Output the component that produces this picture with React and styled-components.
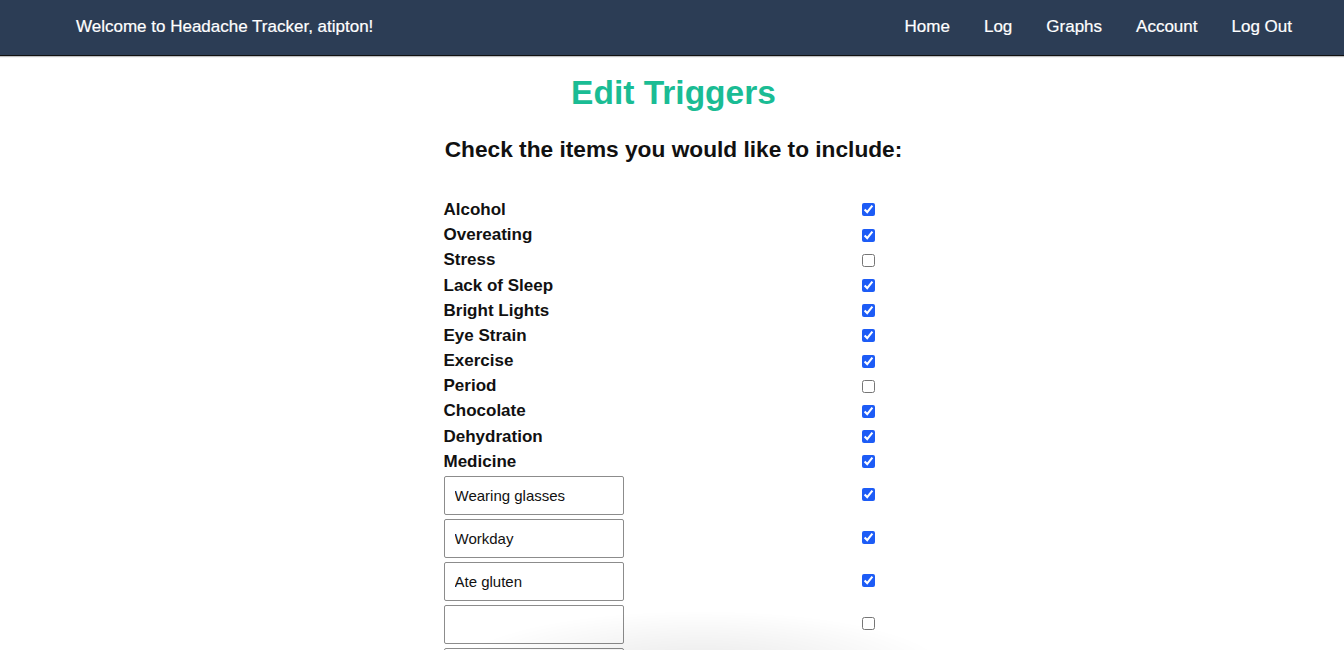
import React, { useState } from "react";
import styled, { createGlobalStyle } from "styled-components";

const GlobalStyle = createGlobalStyle`
	html, body {
		margin: 0;
		padding: 0;
		background: #fff;
		font-family: "Liberation Sans", Arial, Helvetica, sans-serif;
		color: #111;
	}
`;

const Nav = styled.nav`
	height: 55px;
	background-color: #2c3d55;
	border-bottom: 1px solid #111;
	box-shadow: 0 1px 1px rgba(0, 0, 0, 0.25);
	display: flex;
	align-items: center;
	justify-content: space-between;
	padding: 0 52px 0 76px;
	color: #fff;
	font-size: 17px;
	-webkit-text-stroke: 0.2px #fff;
`;

const Welcome = styled.span`
	padding-bottom: 2px;
`;

const Links = styled.ul`
	display: flex;
	gap: 34px;
	list-style: none;
	margin: 0;
	padding: 0 0 2px 0;
`;

const NavLink = styled.li`
	cursor: pointer;
`;

const Main = styled.main`
	display: flex;
	flex-direction: column;
	align-items: center;
	padding-left: 3px;
`;

const Title = styled.h1`
	margin: 17px 0 0;
	font-size: 33.5px;
	line-height: 40px;
	font-weight: 700;
	color: #1abc94;
`;

const Subtitle = styled.h3`
	margin: 22px 0 0;
	font-size: 22.7px;
	line-height: 28px;
	font-weight: 700;
`;

const List = styled.form`
	width: 460px;
	margin-top: 34.4px;
	display: grid;
	grid-template-columns: 413px 24px;
`;

const Label = styled.label`
	height: ${(p) => (p.$input ? "43px" : "25.2px")};
	display: flex;
	align-items: ${(p) => (p.$input ? "flex-start" : "center")};
	padding-top: ${(p) => (p.$input ? "1.4px" : "0")};
	box-sizing: border-box;
	font-size: 17px;
	font-weight: 700;
`;

const Box = styled.div`
	height: ${(p) => (p.$input ? "43px" : "25.2px")};
	display: flex;
	align-items: center;
	justify-content: center;
	padding-bottom: ${(p) => (p.$input ? "2.6px" : "0")};
	box-sizing: border-box;
`;

const Check = styled.input`
	width: 13px;
	height: 13px;
	margin: 0;
	accent-color: #1d5cf6;
`;

const TextInput = styled.input`
	width: 180px;
	height: 39px;
	box-sizing: border-box;
	border: 1px solid #8c8c8c;
	border-radius: 2px;
	padding: 0 10px;
	font-family: "Liberation Sans", Arial, sans-serif;
	font-size: 15px;
	color: #111;
	outline: none;
`;

const Shade = styled.div`
	position: fixed;
	left: 450px;
	bottom: -80px;
	width: 500px;
	height: 120px;
	border-radius: 50%;
	background: radial-gradient(ellipse at center, rgba(0, 0, 0, 0.09) 0%, rgba(0, 0, 0, 0.04) 40%, rgba(0, 0, 0, 0) 70%);
	pointer-events: none;
`;

const fixed = [
	["Alcohol", true],
	["Overeating", true],
	["Stress", false],
	["Lack of Sleep", true],
	["Bright Lights", true],
	["Eye Strain", true],
	["Exercise", true],
	["Period", false],
	["Chocolate", true],
	["Dehydration", true],
	["Medicine", true],
];

const custom = [
	["Wearing glasses", true],
	["Workday", true],
	["Ate gluten", true],
	["", false],
	["", false],
];

export default function App() {
	const [checks, setChecks] = useState(fixed.map((f) => f[1]));
	const [customs, setCustoms] = useState(custom);

	const toggle = (i) => {
		const next = [...checks];
		next[i] = !next[i];
		setChecks(next);
	};

	const updateCustom = (i, val, idx) => {
		const next = customs.map((c) => [...c]);
		next[i][idx] = val;
		setCustoms(next);
	};

	return (
		<>
			<GlobalStyle />
			<Nav>
				<Welcome>Welcome to Headache Tracker, atipton!</Welcome>
				<Links>
					<NavLink>Home</NavLink>
					<NavLink>Log</NavLink>
					<NavLink>Graphs</NavLink>
					<NavLink>Account</NavLink>
					<NavLink>Log Out</NavLink>
				</Links>
			</Nav>
			<Main>
				<Title>Edit Triggers</Title>
				<Subtitle>Check the items you would like to include:</Subtitle>
				<List>
					{fixed.map(([name], i) => (
						<React.Fragment key={name}>
							<Label>{name}</Label>
							<Box>
								<Check type="checkbox" checked={checks[i]} onChange={() => toggle(i)} />
							</Box>
						</React.Fragment>
					))}
					{customs.map(([name, on], i) => (
						<React.Fragment key={"c" + i}>
							<Label $input>
								<TextInput value={name} onChange={(e) => updateCustom(i, e.target.value, 0)} />
							</Label>
							<Box $input>
								<Check type="checkbox" checked={on} onChange={() => updateCustom(i, !on, 1)} />
							</Box>
						</React.Fragment>
					))}
				</List>
			</Main>
			<Shade />
		</>
	);
}
